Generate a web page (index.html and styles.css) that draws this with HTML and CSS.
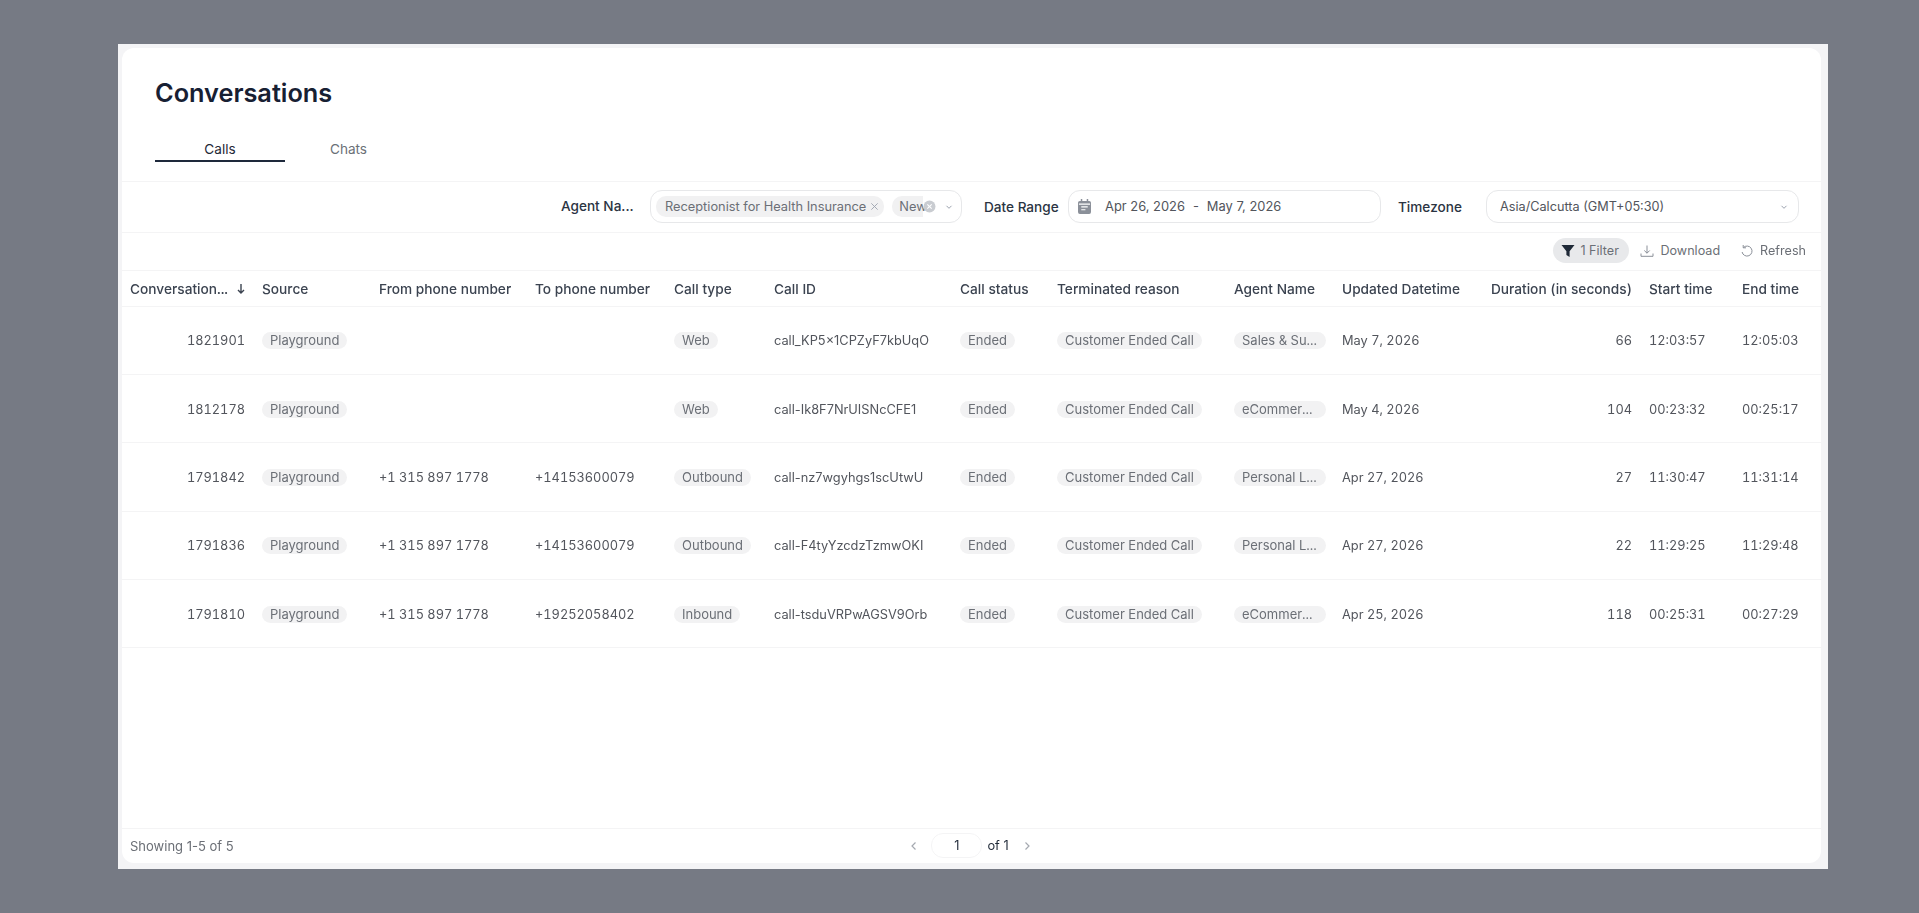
FILE: index.html
```html
<!DOCTYPE html>
<html lang="en">
<head>
<meta charset="utf-8">
<title>Conversations</title>
<link rel="stylesheet" href="styles.css">
</head>
<body>
<main class="frame">
  <div class="sheet">
    <header class="head">
      <h1 class="title">Conversations</h1>
      <nav class="tabs">
        <a class="tab tab-active">Calls</a>
        <a class="tab tab-second">Chats</a>
      </nav>
    </header>

    <section class="filters">
      <span class="label label-agent">Agent Na...</span>
      <div class="field field-agent">
        <span class="chip">Receptionist for Health Insurance
          <svg class="chip-x" viewBox="0 0 10 10"><path d="M1.5 1.5l7 7M8.5 1.5l-7 7"/></svg>
        </span>
        <span class="chip chip-cut">New</span>
        <svg class="clear" viewBox="0 0 12 12"><circle cx="6" cy="6" r="5.5"/><path d="M4 4l4 4M8 4l-4 4"/></svg>
        <svg class="chev" viewBox="0 0 10 10"><path d="M2.5 3.8L5 6.3l2.5-2.5"/></svg>
      </div>
      <span class="label label-date">Date Range</span>
      <div class="field field-date">
        <svg class="cal" viewBox="0 0 14 16"><path d="M3 0h1.6v2h4.8V0H11v2h1a2 2 0 0 1 2 2v10a2 2 0 0 1-2 2H2a2 2 0 0 1-2-2V4a2 2 0 0 1 2-2h1z"/><path class="cal-line" d="M1 5.500h12M3.500 8.500h7M3.500 11.500h4.500"/></svg>
        <span class="date-from">Apr 26, 2026</span>
        <span class="date-sep">-</span>
        <span>May 7, 2026</span>
      </div>
      <span class="label label-zone">Timezone</span>
      <div class="field field-zone">
        <span>Asia/Calcutta (GMT+05:30)</span>
        <svg class="chev" viewBox="0 0 10 10"><path d="M2.5 3.8L5 6.3l2.500-2.500"/></svg>
      </div>
    </section>

    <section class="tools">
      <button class="tool tool-filter">
        <svg class="funnel" viewBox="0 0 14 14"><path d="M.5 1h13L8.600 7.200V13L5.400 11V7.200z"/></svg>
        1 Filter
      </button>
      <button class="tool">
        <svg class="tool-ico" viewBox="0 0 14 14"><path d="M7 1.500v7.500M4.300 6.500L7 9.200l2.700-2.700M1 9.500v2.800h12V9.500"/></svg>
        Download
      </button>
      <button class="tool tool-refresh">
        <svg class="tool-ico" viewBox="0 0 14 14"><path d="M3.400 3.600A5 5 0 1 1 2.100 8M3.200 1v2.800H6"/></svg>
        Refresh
      </button>
    </section>

    <table class="grid">
      <colgroup>
        <col class="c1"><col class="c2"><col class="c3"><col class="c4"><col class="c5"><col class="c6"><col class="c7"><col class="c8"><col class="c9"><col class="c10"><col class="c11"><col class="c12"><col class="c13">
      </colgroup>
      <thead>
        <tr>
          <th><span class="sort">Conversation...<svg class="arrow" viewBox="0 0 10 12"><path d="M5 1v9M2 7l3 3 3-3"/></svg></span></th>
          <th>Source</th><th>From phone number</th><th>To phone number</th><th>Call type</th><th>Call ID</th><th>Call status</th><th>Terminated reason</th><th>Agent Name</th><th>Updated Datetime</th><th class="num">Duration (in seconds)</th><th>Start time</th><th>End time</th>
        </tr>
      </thead>
      <tbody>
        <tr>
          <td class="num">1821901</td><td><span class="pill">Playground</span></td><td></td><td></td><td><span class="pill">Web</span></td><td class="call-id">call_KP5×1CPZyF7kbUqO</td><td><span class="pill">Ended</span></td><td><span class="pill">Customer Ended Call</span></td><td><span class="pill pill-agent">Sales &amp; Su...</span></td><td>May 7, 2026</td><td class="num">66</td><td>12:03:57</td><td>12:05:03</td>
        </tr>
        <tr>
          <td class="num">1812178</td><td><span class="pill">Playground</span></td><td></td><td></td><td><span class="pill">Web</span></td><td class="call-id">call-Ik8F7NrUISNcCFE1</td><td><span class="pill">Ended</span></td><td><span class="pill">Customer Ended Call</span></td><td><span class="pill pill-agent">eCommer...</span></td><td>May 4, 2026</td><td class="num">104</td><td>00:23:32</td><td>00:25:17</td>
        </tr>
        <tr>
          <td class="num">1791842</td><td><span class="pill">Playground</span></td><td>+1 315 897 1778</td><td>+14153600079</td><td><span class="pill">Outbound</span></td><td class="call-id">call-nz7wgyhgs1scUtwU</td><td><span class="pill">Ended</span></td><td><span class="pill">Customer Ended Call</span></td><td><span class="pill pill-agent">Personal L...</span></td><td>Apr 27, 2026</td><td class="num">27</td><td>11:30:47</td><td>11:31:14</td>
        </tr>
        <tr>
          <td class="num">1791836</td><td><span class="pill">Playground</span></td><td>+1 315 897 1778</td><td>+14153600079</td><td><span class="pill">Outbound</span></td><td class="call-id">call-F4tyYzcdzTzmwOKI</td><td><span class="pill">Ended</span></td><td><span class="pill">Customer Ended Call</span></td><td><span class="pill pill-agent">Personal L...</span></td><td>Apr 27, 2026</td><td class="num">22</td><td>11:29:25</td><td>11:29:48</td>
        </tr>
        <tr>
          <td class="num">1791810</td><td><span class="pill">Playground</span></td><td>+1 315 897 1778</td><td>+19252058402</td><td><span class="pill">Inbound</span></td><td class="call-id">call-tsduVRPwAGSV9Orb</td><td><span class="pill">Ended</span></td><td><span class="pill">Customer Ended Call</span></td><td><span class="pill pill-agent">eCommer...</span></td><td>Apr 25, 2026</td><td class="num">118</td><td>00:25:31</td><td>00:27:29</td>
        </tr>
      </tbody>
    </table>

    <footer class="foot">
      <span class="count">Showing 1-5 of 5</span>
      <div class="pager">
        <svg class="page-chev" viewBox="0 0 8 12"><path d="M5.500 2.500L2 6l3.500 3.500"/></svg>
        <span class="page-box">1</span>
        <span class="page-of">of 1</span>
        <svg class="page-chev" viewBox="0 0 8 12"><path d="M2.500 2.500L6 6 2.500 9.500"/></svg>
      </div>
      <span class="foot-end"></span>
    </footer>
  </div>
</main>
</body>
</html>
```

FILE: styles.css
```css
* { box-sizing: border-box; }
html, body { height: 100%; }
body {
  margin: 0;
  background: #767a84;
  font-family: Inter, "Liberation Sans", sans-serif;
  color: #52555c;
  overflow: hidden;
}
.frame {
  width: 1710px;
  height: 825px;
  margin: 44px 0 0 118px;
  padding: 4px 7px 6px 4px;
  background: #f4f4f6;
}
.sheet {
  height: 100%;
  display: flex;
  flex-direction: column;
  background: #fff;
  border-radius: 12px;
  filter: blur(0.4px);
}
.head {
  padding: 29px 33px 20px;
  height: 134px;
  border-bottom: 1px solid #f4f4f5;
}
.title {
  margin: 0;
  font-size: 25.3px;
  line-height: 32px;
  font-weight: 600;
  color: #172033;
}
.tabs { display: flex; margin-top: 26px; }
.tab {
  width: 130px;
  height: 27px;
  padding-top: 6px;
  text-align: center;
  font-size: 13.6px;
  line-height: 17px;
  color: #6b7077;
}
.tab-second { width: 127px; }
.tab-active { color: #1f2937; border-bottom: 2px solid #1e293b; }

.filters {
  height: 51px;
  padding: 8px 22px 8px 0;
  display: flex;
  align-items: flex-start;
  justify-content: flex-end;
  border-bottom: 1px solid #f4f4f5;
}
.label {
  height: 33px;
  display: flex;
  align-items: center;
  font-size: 13.6px;
  font-weight: 500;
  color: #2b3442;
}
.label-agent { width: 89px; padding-bottom: 1px; }
.label-date { width: 84px; margin-left: 22px; padding-top: 1px; }
.label-zone { width: 88px; margin-left: 17px; padding-top: 1px; }
.field {
  position: relative;
  width: 313px;
  height: 33px;
  display: flex;
  align-items: center;
  border: 1px solid #e7e8ea;
  border-radius: 12px;
  font-size: 12.9px;
  color: #52555c;
}
.field-agent { width: 312px; padding-left: 5px; gap: 8px; }
.field-date { padding-left: 9px; }
.field-zone { padding-left: 13px; justify-content: space-between; padding-right: 9px; font-size: 12.7px; }
.chip {
  display: inline-flex;
  align-items: center;
  height: 21px;
  padding: 0 5px 0 9px;
  gap: 4px;
  background: #f1f1f2;
  border-radius: 10px;
  color: #6b6f76;
  white-space: nowrap;
  font-size: 12.8px;
}
.chip-x { width: 9px; height: 9px; fill: none; stroke: #9ca3af; stroke-width: 1; }
.chip-cut { width: 31px; padding: 0 0 0 7px; border-radius: 10px 0 0 10px; }
.clear { position: absolute; left: 272px; top: 9px; width: 13px; height: 13px; }
.clear circle { fill: #c9ccd1; }
.clear path { stroke: #fff; stroke-width: 1; fill: none; }
.chev { width: 10px; height: 10px; fill: none; stroke: #9ca3af; stroke-width: 1; }
.field-agent .chev { position: absolute; right: 7px; top: 11px; }
.cal { width: 13px; height: 15px; fill: #8b9099; flex: none; }
.cal-line { stroke: #fff; stroke-width: 1.300; fill: none; }
.date-from { margin-left: 14px; }
.date-sep { margin: 0 8px; }

.tools {
  height: 38px;
  padding: 5px 15px 0 0;
  display: flex;
  align-items: flex-start;
  justify-content: flex-end;
  border-bottom: 1px solid #f4f4f5;
}
.tool {
  display: flex;
  align-items: center;
  gap: 6px;
  height: 25px;
  border: 0;
  padding: 0;
  background: none;
  font: inherit;
  font-size: 12.6px;
  color: #6b6f76;
  margin-left: 21px;
}
.tool-refresh { margin-left: 20px; }
.tool-filter {
  width: 76px;
  margin-right: -10px;
  padding-left: 8px;
  gap: 5px;
  background: #e8e9eb;
  border-radius: 13px;
}
.funnel { width: 14px; height: 14px; fill: #1f2937; }
.tool-ico { width: 14px; height: 14px; fill: none; stroke: #8b9099; stroke-width: 1; }

.grid {
  width: 1699px;
  margin-bottom: auto;
  table-layout: fixed;
  border-collapse: collapse;
  font-size: 12.8px;
  font-variant-numeric: tabular-nums;
  color: #52555c;
}
.c1 { width: 132px; } .c2 { width: 117px; } .c3 { width: 156px; } .c4 { width: 139px; }
.c5 { width: 100px; } .c6 { width: 186px; } .c7 { width: 97px; } .c8 { width: 177px; }
.c9 { width: 108px; } .c10 { width: 107px; } .c11 { width: 200px; } .c12 { width: 93px; } .c13 { width: 87px; }
.grid th {
  height: 35px;
  padding: 2px 8px 0;
  text-align: left;
  font-size: 13.7px;
  font-weight: 500;
  color: #3b4350;
  white-space: nowrap;
  border-bottom: 1px solid #f4f4f5;
}
.grid td {
  height: 68.4px;
  padding: 1px 8px 0;
  white-space: nowrap;
  border-bottom: 1px solid #f4f4f5;
}
.grid .num { text-align: right; padding-right: 9px; }
.grid .call-id { font-variant-numeric: normal; }
.sort { display: flex; align-items: center; justify-content: space-between; }
.arrow { width: 10px; height: 12px; fill: none; stroke: #3b4350; stroke-width: 1.4; }
.pill {
  display: inline-block;
  height: 17px;
  padding: 0 8px;
  line-height: 17px;
  background: #f2f2f3;
  border-radius: 9px;
  color: #6b6f76;
  font-size: 13px;
}
.pill-agent { width: 92px; overflow: hidden; vertical-align: middle; }

.foot {
  height: 35px;
  display: flex;
  align-items: center;
  padding: 0 10px 1px 8px;
  font-size: 13px;
  border-top: 1px solid #f4f4f5;
  flex: none;
}
.count { flex: 1; color: #6b6f76; }
.foot-end { flex: 1; }
.pager { display: flex; align-items: center; color: #1f2937; font-size: 12.8px; }
.page-chev { width: 8px; height: 12px; fill: none; stroke: #a5a9b0; stroke-width: 1.2; }
.page-box {
  width: 51px;
  height: 25px;
  margin: 0 5px 0 13px;
  border: 1px solid #f4f4f5;
  border-radius: 12px;
  text-align: center;
  line-height: 23px;
}
.page-of { margin-right: 14px; }
```
